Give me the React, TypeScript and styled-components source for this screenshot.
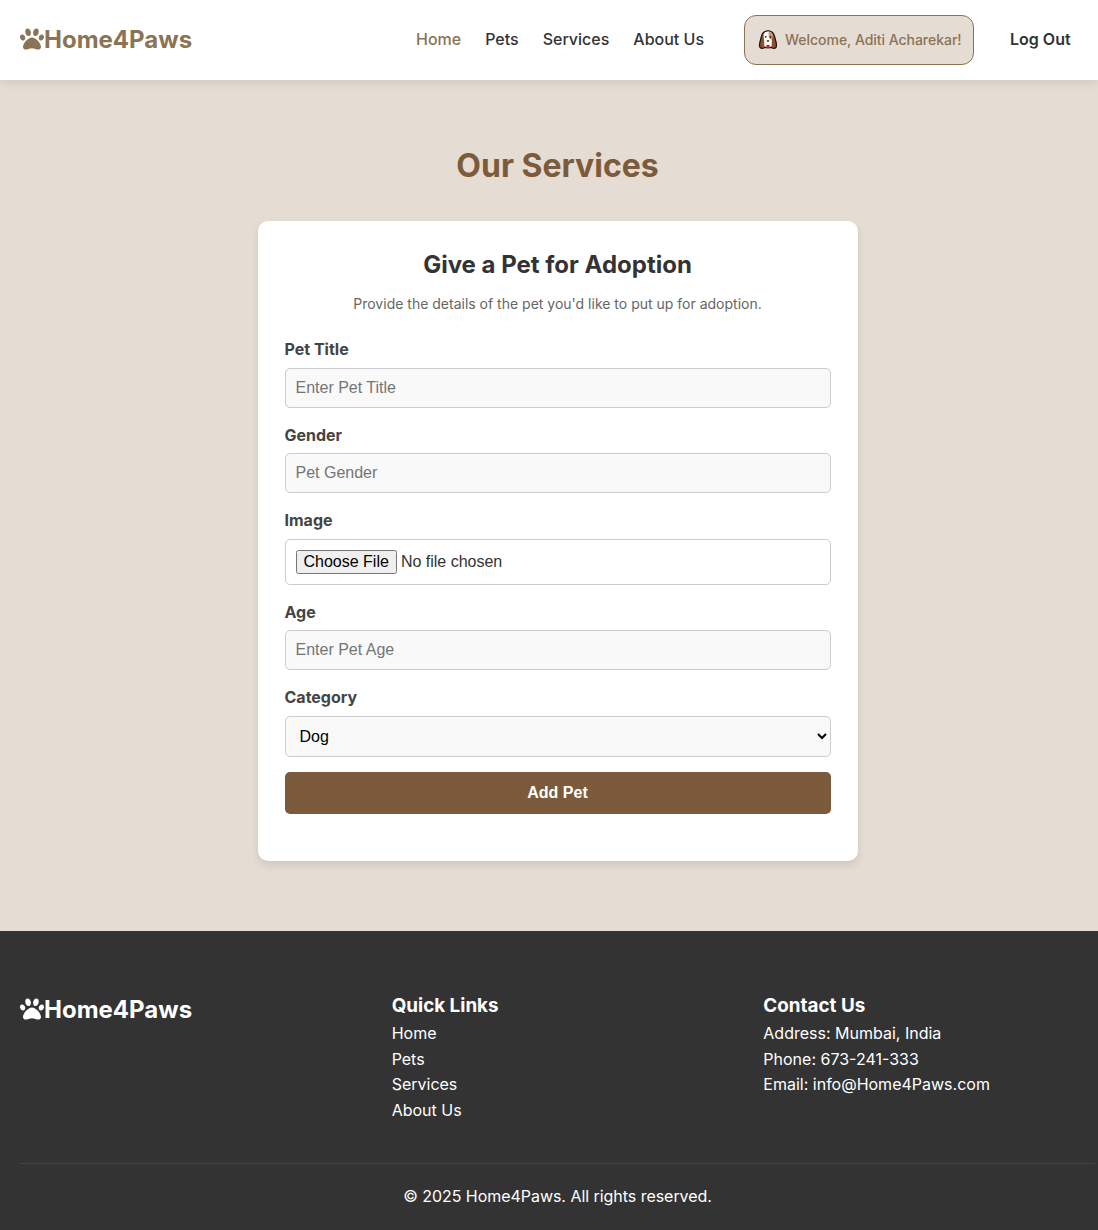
import React from 'react';
import styled, { createGlobalStyle } from 'styled-components';
import { FaPaw } from 'react-icons/fa';

const Global = createGlobalStyle`
  * { box-sizing: border-box; margin: 0; padding: 0; }
  body { font-family: Inter, sans-serif; line-height: 1.6; background: #e5dcd3; color: #333; overflow-x: hidden; }
  ul { list-style: none; }
`;

const Header = styled.header`
  height: 80px;
  background: #fff;
  display: flex;
  align-items: center;
  justify-content: space-between;
  padding: 0 27.4px 0 20px;
  box-shadow: 0 2px 10px rgba(0, 0, 0, 0.1);
  position: relative;
`;

const Brand = styled.div<{ $light?: boolean }>`
  display: flex;
  align-items: center;
  align-self: start;
  margin-top: ${(p) => (p.$light ? 0 : 21)}px;
  font-size: 24px;
  font-weight: 700;
  line-height: 38px;
  color: ${(p) => (p.$light ? '#fff' : '#8b7355')};

  svg { margin-bottom: 2px; }
`;

const Nav = styled.nav`
  display: flex;
  align-items: center;
`;

const Links = styled.ul`
  display: flex;
  gap: 24px;
  margin-right: 40px;
`;

const NavLink = styled.a<{ $active?: boolean; $strong?: boolean }>`
  font-weight: ${(p) => (p.$strong ? 600 : 500)};
  font-size: 16px;
  color: ${(p) => (p.$active ? '#8b7355' : '#333')};
`;

const Welcome = styled.div`
  width: 230px;
  height: 50px;
  border: 1px solid #8b7355;
  border-radius: 12px;
  background: #e5dcd3;
  color: #8b7355;
  font-size: 14px;
  font-weight: 500;
  letter-spacing: -0.03px;
  white-space: nowrap;
  display: flex;
  align-items: center;
  padding-left: 12px;
  gap: 8px;
  margin-right: 36px;
`;

const Main = styled.main`
  display: flex;
  flex-direction: column;
  align-items: center;
  padding: 60px 0 70px 17px;
`;

const Title = styled.h1`
  font-size: 32px;
  line-height: 51px;
  color: #7b5b3c;
  margin-bottom: 30px;
`;

const Card = styled.section`
  width: 600px;
  height: 640px;
  background: #fff;
  border-radius: 10px;
  box-shadow: 0 4px 8px rgba(0, 0, 0, 0.1);
  padding: 25px 27px;
`;

const CardTitle = styled.h2`
  font-size: 24px;
  line-height: 38px;
  text-align: center;
`;

const Hint = styled.p`
  font-size: 14px;
  line-height: 22px;
  color: #666;
  text-align: center;
  margin: 9px 0 22px;
`;

const Field = styled.div`
  margin-bottom: 15px;
`;

const Label = styled.label`
  display: block;
  font-weight: 700;
  line-height: 25.6px;
  color: #444;
  margin-bottom: 5px;
`;

const Input = styled.input`
  display: block;
  width: 100%;
  height: ${(p) => (p.type === 'file' ? 46 : 40)}px;
  padding: 10px;
  border: 1px solid #ccc;
  border-radius: 5px;
  background: ${(p) => (p.type === 'file' ? '#fff' : '#f9f9f9')};
  font: 16px 'Liberation Sans', Arial, sans-serif;
  color: #333;
`;

const Select = styled.select`
  display: block;
  width: 100%;
  height: 41px;
  padding: 10px;
  border: 1px solid #ccc;
  border-radius: 5px;
  background: #f9f9f9;
  font: 16px 'Liberation Sans', Arial, sans-serif;
`;

const Submit = styled.button`
  width: 100%;
  height: 42px;
  border: 0;
  border-radius: 5px;
  background: #7b5b3c;
  color: #fff;
  font: bold 16px 'Liberation Sans', Arial, sans-serif;
`;

const Footer = styled.footer`
  height: 299px;
  background: #333;
  color: #fff;
  padding: 60px 3px 0 20px;
`;

const Columns = styled.div`
  display: grid;
  grid-template-columns: repeat(3, 1fr);
  column-gap: 40px;
  height: 173px;
  border-bottom: 1px solid #444;
`;

const Heading = styled.h3`
  font-size: 18.85px;
  line-height: 30px;
`;

const Line = styled.li`
  font-size: 16px;
  line-height: 25.6px;
`;

const Copyright = styled.p`
  text-align: center;
  margin-top: 20px;
  letter-spacing: -0.04px;
`;

const DogIcon = () => (
  <svg width="20" height="20" viewBox="0 0 20 20">
    <path d="M6.500 2.500C7.800 1.300 9.200.8 11 .8s3.200.5 4.500 1.700c1.200 1.100 1.700 2.600 2.200 4.500.7 2.700 1.800 5.500 1.800 8.500 0 1.900-1 2.900-2.600 2.900-1 0-1.700-.3-2.300-.8H7.400c-.6.500-1.300.8-2.300.8-1.600 0-2.600-1-2.600-2.900 0-3 1.100-5.800 1.800-8.500.5-1.900 1-3.400 2.200-4.500z" fill="#8a5232" stroke="#1b1412" strokeWidth="1.200" />
    <path d="M11 1.400c-2.300 0-3.900.9-4.400 3C6.300 6.500 7.300 9 7.300 12.500v3.600c1 .9 2.200 1.200 3.700 1.200s2.700-.3 3.700-1.200v-3.600c0-3.500 1-6 .7-8.100-.5-2.100-2.100-3-4.400-3z" fill="#fff" />
    <path d="M11.700 1.400c2.100.1 3.300 1.100 3.700 3 .3 1.900-.3 3.600-.5 5.400-1.800-.2-3.100-1.400-3.300-3.400z" fill="#c49a6c" />
    <circle cx="8.700" cy="6.800" r=".9" fill="#1b1412" />
    <circle cx="13.500" cy="6.800" r=".9" fill="#1b1412" />
    <path d="M9.800 10.600h2.400l-1.200 1.300z" fill="#1b1412" stroke="#1b1412" strokeWidth=".4" />
    <path d="M9.300 15h3.400v1.500c0 1.300-.8 2-1.700 2s-1.700-.7-1.700-2z" fill="#e3122b" />
  </svg>
);

const navItems = ['Home', 'Pets', 'Services', 'About Us'];

export default function App() {
  return (
    <>
      <Global />
      <Header>
        <Brand><FaPaw />Home4Paws</Brand>
        <Nav>
          <Links>{navItems.map((n, i) => <li key={n}><NavLink $active={i === 0}>{n}</NavLink></li>)}</Links>
          <Welcome><DogIcon />Welcome, Aditi Acharekar!</Welcome>
          <NavLink $strong>Log Out</NavLink>
        </Nav>
      </Header>
      <Main>
        <Title>Our Services</Title>
        <Card>
          <CardTitle>Give a Pet for Adoption</CardTitle>
          <Hint>Provide the details of the pet you'd like to put up for adoption.</Hint>
          <form>
            <Field><Label>Pet Title</Label><Input placeholder="Enter Pet Title" /></Field>
            <Field><Label>Gender</Label><Input placeholder="Pet Gender" /></Field>
            <Field><Label>Image</Label><Input type="file" /></Field>
            <Field><Label>Age</Label><Input placeholder="Enter Pet Age" /></Field>
            <Field><Label>Category</Label><Select><option>Dog</option></Select></Field>
            <Submit type="button">Add Pet</Submit>
          </form>
        </Card>
      </Main>
      <Footer>
        <Columns>
          <Brand $light><FaPaw />Home4Paws</Brand>
          <div><Heading>Quick Links</Heading><ul>{navItems.map((n) => <Line key={n}>{n}</Line>)}</ul></div>
          <div>
            <Heading>Contact Us</Heading>
            <ul><Line>Address: Mumbai, India</Line><Line>Phone: 673-241-333</Line><Line>Email: info@Home4Paws.com</Line></ul>
          </div>
        </Columns>
        <Copyright>© 2025 Home4Paws. All rights reserved.</Copyright>
      </Footer>
    </>
  );
}
